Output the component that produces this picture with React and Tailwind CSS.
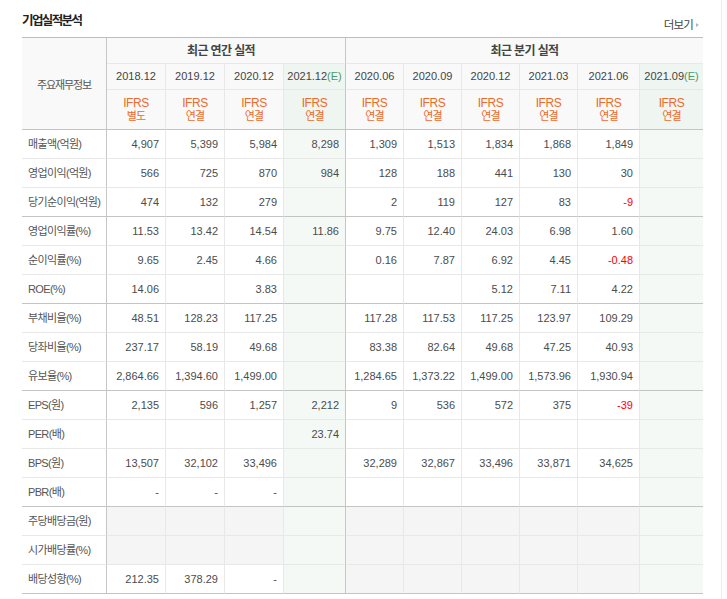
import React from "react";

const cols = [
  { date: "2018.12", sub: "별도" },
  { date: "2019.12", sub: "연결" },
  { date: "2020.12", sub: "연결" },
  { date: "2021.12", sub: "연결", est: true },
  { date: "2020.06", sub: "연결" },
  { date: "2020.09", sub: "연결" },
  { date: "2020.12", sub: "연결" },
  { date: "2021.03", sub: "연결" },
  { date: "2021.06", sub: "연결" },
  { date: "2021.09", sub: "연결", est: true },
];

// dark: thicker group line under the row, gray: empty cells get a gray fill
const rows = [
  { label: "매출액(억원)", v: ["4,907", "5,399", "5,984", "8,298", "1,309", "1,513", "1,834", "1,868", "1,849", ""] },
  { label: "영업이익(억원)", v: ["566", "725", "870", "984", "128", "188", "441", "130", "30", ""] },
  { label: "당기순이익(억원)", v: ["474", "132", "279", "", "2", "119", "127", "83", "-9", ""], dark: true },
  { label: "영업이익률(%)", v: ["11.53", "13.42", "14.54", "11.86", "9.75", "12.40", "24.03", "6.98", "1.60", ""] },
  { label: "순이익률(%)", v: ["9.65", "2.45", "4.66", "", "0.16", "7.87", "6.92", "4.45", "-0.48", ""] },
  { label: "ROE(%)", v: ["14.06", "", "3.83", "", "", "", "5.12", "7.11", "4.22", ""], dark: true },
  { label: "부채비율(%)", v: ["48.51", "128.23", "117.25", "", "117.28", "117.53", "117.25", "123.97", "109.29", ""] },
  { label: "당좌비율(%)", v: ["237.17", "58.19", "49.68", "", "83.38", "82.64", "49.68", "47.25", "40.93", ""] },
  { label: "유보율(%)", v: ["2,864.66", "1,394.60", "1,499.00", "", "1,284.65", "1,373.22", "1,499.00", "1,573.96", "1,930.94", ""], dark: true },
  { label: "EPS(원)", v: ["2,135", "596", "1,257", "2,212", "9", "536", "572", "375", "-39", ""] },
  { label: "PER(배)", v: ["", "", "", "23.74", "", "", "", "", "", ""] },
  { label: "BPS(원)", v: ["13,507", "32,102", "33,496", "", "32,289", "32,867", "33,496", "33,871", "34,625", ""] },
  { label: "PBR(배)", v: ["-", "-", "-", "", "", "", "", "", "", ""], dark: true },
  { label: "주당배당금(원)", v: ["", "", "", "", "", "", "", "", "", ""], gray: true },
  { label: "시가배당률(%)", v: ["", "", "", "", "", "", "", "", "", ""], gray: true },
  { label: "배당성향(%)", v: ["212.35", "378.29", "-", "", "", "", "", "", "", ""], gray: true, dark: true },
];

const rightBorder = (ci) =>
  ci === 3 ? "border-r border-r-[#c6c6c6]" : ci === 9 ? "" : "border-r border-r-[#e8e8e8]";

const bottomBorder = (dark) => (dark ? "border-b border-b-[#c4c4c4]" : "border-b border-b-[#e8e8e8]");

const kr = "font-['Liberation_Sans','Noto_Sans_CJK_KR',sans-serif]";

const App = () => {
  return (
    <div className={`flex w-[727px] h-[599px] bg-white text-[#4c4c4c] ${kr}`}>
      <div className="w-[721px] pl-[22px] pr-[18px]">
        <div className="flex h-[37px] items-start justify-between">
          <h2 className="mt-[13px] text-[12.5px] leading-[16px] font-bold tracking-[-1.6px] text-[#222]">
            기업실적분석
          </h2>
          <a className="mt-[18px] flex items-center gap-[3px] pr-[4px] text-[11.5px] leading-[14px] tracking-[-0.8px] text-[#444]">
            더보기
            <span className="h-0 w-0 border-y-[2.5px] border-l-[3px] border-y-transparent border-l-[#b5b5b5]" />
          </a>
        </div>

        <div className="grid grid-cols-[85px_59px_59px_59px_62px_58px_58px_58px_58px_62px_63px] border-t border-t-[#bdbdbd]">
          <div className="row-span-3 flex items-center justify-center border-r border-b border-r-[#c6c6c6] border-b-[#c4c4c4] bg-[#f9f9f9] pt-[3px] text-[11px] tracking-[-1.1px] text-[#555]">
            주요재무정보
          </div>
          <div className="col-span-4 flex h-[26px] items-center justify-center border-r border-b border-r-[#c6c6c6] border-b-[#e8e8e8] bg-[#f9f9f9] pr-[10px] text-[12px] font-bold tracking-[-0.6px] text-[#444]">
            최근 연간 실적
          </div>
          <div className="col-span-6 flex h-[26px] items-center justify-center border-b border-b-[#e8e8e8] bg-[#f9f9f9] text-[12px] font-bold tracking-[-0.6px] text-[#444]">
            최근 분기 실적
          </div>

          {cols.map((c, ci) => (
            <div
              key={"d" + ci}
              className={`flex h-[26px] items-center justify-center text-[11px] text-[#444] ${rightBorder(ci)} ${bottomBorder(false)} ${
                c.est ? "bg-[#eff5f0]" : "bg-[#f9f9f9]"
              }`}
            >
              {c.date}
              {c.est && <span className="text-[#4b9a68]">(E)</span>}
            </div>
          ))}

          {cols.map((c, ci) => (
            <div
              key={"s" + ci}
              className={`flex h-[40px] flex-col items-center justify-center text-[12px] leading-[13px] tracking-[-0.4px] text-[#ec6a2c] ${rightBorder(ci)} ${bottomBorder(true)} ${
                c.est ? "bg-[#eff5f0]" : "bg-[#f9f9f9]"
              }`}
            >
              <span>IFRS</span>
              <span className="text-[11px] tracking-[-0.8px]">{c.sub}</span>
            </div>
          ))}

          {rows.map((r, ri) => (
            <React.Fragment key={ri}>
              <div
                className={`flex h-[29px] items-center pl-[6px] text-[11px] tracking-[-0.65px] text-[#555] border-r border-r-[#c6c6c6] ${bottomBorder(r.dark)}`}
              >
                {r.label}
              </div>
              {r.v.map((val, ci) => {
                const est = cols[ci].est;
                let bg = "bg-white";
                if (est) bg = "bg-[#f4f9f5]";
                else if (r.gray && val === "") bg = "bg-[#f5f5f5]";
                const neg = val.startsWith("-") && val.length > 1;
                return (
                  <div
                    key={ci}
                    className={`flex h-[29px] items-center justify-end pr-[6px] text-[11px] ${
                      neg ? "text-[#f00]" : "text-[#4c4c4c]"
                    } ${rightBorder(ci)} ${bottomBorder(r.dark)} ${bg}`}
                  >
                    {val}
                  </div>
                );
              })}
            </React.Fragment>
          ))}
        </div>
      </div>
      <div className="w-[6px] border-l border-l-[#ececec] bg-[#fdfdfd]" />
    </div>
  );
};

export default App;
